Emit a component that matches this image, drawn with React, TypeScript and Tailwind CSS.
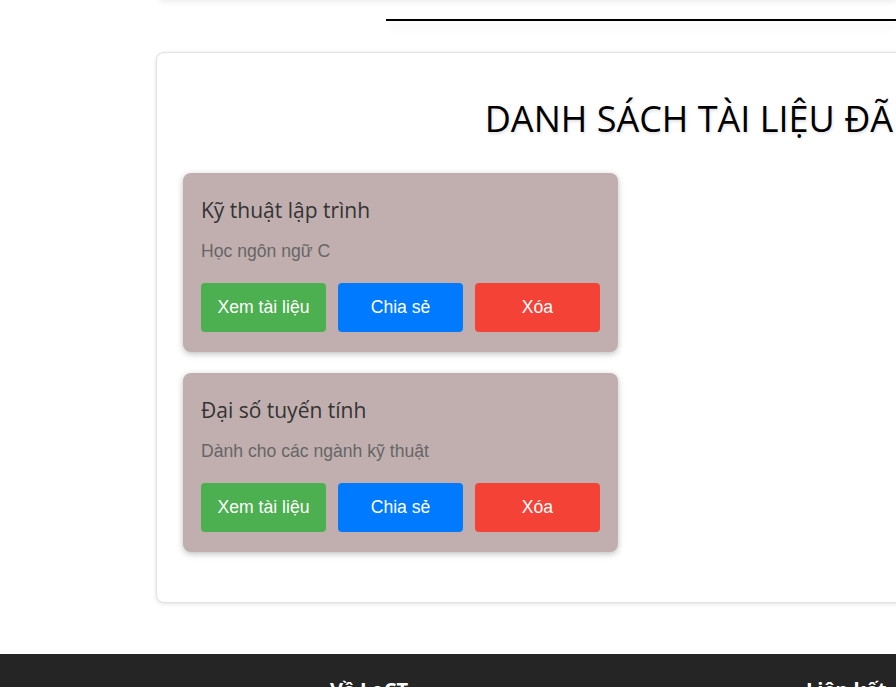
const docs = [
  { title: "Kỹ thuật lập trình", desc: "Học ngôn ngữ C" },
  { title: "Đại số tuyến tính", desc: "Dành cho các ngành kỹ thuật" },
];

function DocCard({ title, desc }: { title: string; desc: string }) {
  return (
    <div className="w-[435px] rounded-lg bg-[#c1afaf] px-[18px] pt-[22px] pb-[20px] shadow-[0_2px_6px_rgba(0,0,0,0.25)]">
      <h3 className="font-['Open_Sans',sans-serif] text-[21px] leading-[30px] text-[#333]">{title}</h3>
      <p className="mt-[15px] font-['Liberation_Sans',Arial,sans-serif] text-[17.6px] leading-[22px] text-[#666]">{desc}</p>
      <div className="mt-[21px] flex gap-3 font-['Liberation_Sans',Arial,sans-serif] text-[17.6px] text-white">
        <button className="h-[49px] flex-1 rounded bg-[#4caf50]">Xem tài liệu</button>
        <button className="h-[49px] flex-1 rounded bg-[#007bff]">Chia sẻ</button>
        <button className="h-[49px] flex-1 rounded bg-[#f44336]">Xóa</button>
      </div>
    </div>
  );
}

export default function App() {
  return (
    <div className="h-[687px] w-[896px] overflow-hidden bg-white">
      {/* header scrolled out of view */}
      <div className="-mt-[20px] ml-[160px] h-[20px] bg-white shadow-[0_2px_6px_rgba(0,0,0,0.08)]" />
      <div className="mt-[19px] ml-[386px] h-[2px] bg-black shadow-[0_6px_8px_rgba(0,0,0,0.08)]" />

      <section className="mt-[31px] ml-[156px] h-[551px] w-[1122px] rounded-lg border border-[#e2e2e2] bg-white pl-[26px] pt-[42px] shadow-[0_1px_4px_rgba(0,0,0,0.12)]">
        <h2 className="text-center font-['Open_Sans',sans-serif] text-[36px] leading-[48px] text-black [text-shadow:1px_2px_3px_rgba(0,0,0,0.12)]">
          DANH SÁCH TÀI LIỆU ĐÃ LƯU
        </h2>
        <div className="mt-[30px] flex flex-col gap-[21px]">
          {docs.map((d) => (
            <DocCard key={d.title} {...d} />
          ))}
        </div>
      </section>

      <footer className="mt-[51px] h-[200px] bg-[#252525] pt-[21px] font-['Open_Sans',sans-serif] text-[20px] font-bold text-white">
        <div className="flex">
          <h4 className="ml-[330px]">Về LoCT</h4>
          <h4 className="ml-[398px]">Liên kết</h4>
        </div>
      </footer>
    </div>
  );
}
